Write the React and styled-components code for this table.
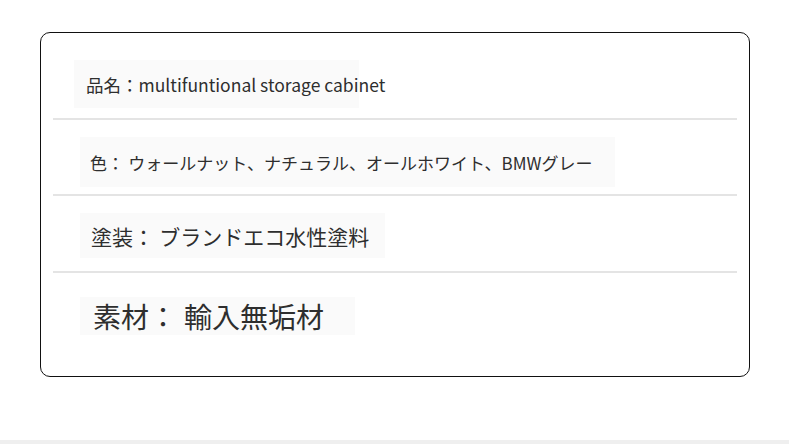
import React from 'react'
import styled, { createGlobalStyle } from 'styled-components'

const GlobalStyle = createGlobalStyle`
  html, body {
    margin: 0;
    padding: 0;
    background: #ffffff;
  }
  body {
    font-family: 'Noto Sans CJK JP', 'Noto Sans', sans-serif;
    color: #333333;
  }
`

const specs = [
  { label: '品名：', value: 'multifuntional storage cabinet', size: 17.5, gap: 0.15, top: 0, left: 21, w: 285, h: 48, pad: 12, after: 10 },
  { label: '色：', value: 'ウォールナット、ナチュラル、オールホワイト、BMWグレー', size: 17, gap: 0.25, top: 17, left: 27, w: 535, h: 50, pad: 10, after: 7 },
  { label: '塗装：', value: 'ブランドエコ水性塗料', size: 21, gap: 0.25, top: 17, left: 27, w: 305, h: 45, pad: 11, after: 13 },
  { label: '素材：', value: '輸入無垢材', size: 28, gap: 0.25, top: 24, left: 27, w: 275, h: 38, pad: 13, after: 0 },
]

const App = () => {
  return (
    <Page>
      <GlobalStyle />
      <Card>
        {specs.map((s, i) => (
          <Row key={s.label} $top={s.top} $after={s.after}>
            <Tag $left={s.left} $w={s.w} $h={s.h} $pad={s.pad} $size={s.size}>
              <span>{s.label}</span>
              <Gap $w={s.gap} />
              <span>{s.value}</span>
            </Tag>
            {i < specs.length - 1 && <Divider />}
          </Row>
        ))}
      </Card>
      <Strip />
    </Page>
  )
}

export default App

const Page = styled.div`
  width: 790px;
  height: 444px;
  padding-top: 32px;
  box-sizing: border-box;
  display: flex;
  flex-direction: column;
  overflow: hidden;
`

const Card = styled.section`
  margin-left: 40px;
  width: 710px;
  box-sizing: border-box;
  border: 1px solid #111111;
  border-radius: 10px;
  padding: 27px 12px 41px;
  display: flex;
  flex-direction: column;
`

const Row = styled.div`
  margin-top: ${(p) => p.$top}px;
  display: flex;
  flex-direction: column;

  hr {
    margin-top: ${(p) => p.$after}px;
  }
`

const Tag = styled.div`
  margin-left: ${(p) => p.$left}px;
  width: ${(p) => p.$w}px;
  height: ${(p) => p.$h}px;
  padding-left: ${(p) => p.$pad}px;
  box-sizing: border-box;
  background: #fafafa;
  display: flex;
  align-items: center;
  white-space: nowrap;
  font-size: ${(p) => p.$size}px;
  color: #2e2e2e;
  overflow: visible;
`

const Gap = styled.span`
  display: inline-block;
  width: ${(p) => p.$w}em;
`

const Divider = styled.hr`
  margin: 0;
  border: none;
  height: 2px;
  background: #e4e4e4;
`

const Strip = styled.div`
  margin-top: auto;
  height: 4px;
  width: 789px;
  background: #efefef;
`
